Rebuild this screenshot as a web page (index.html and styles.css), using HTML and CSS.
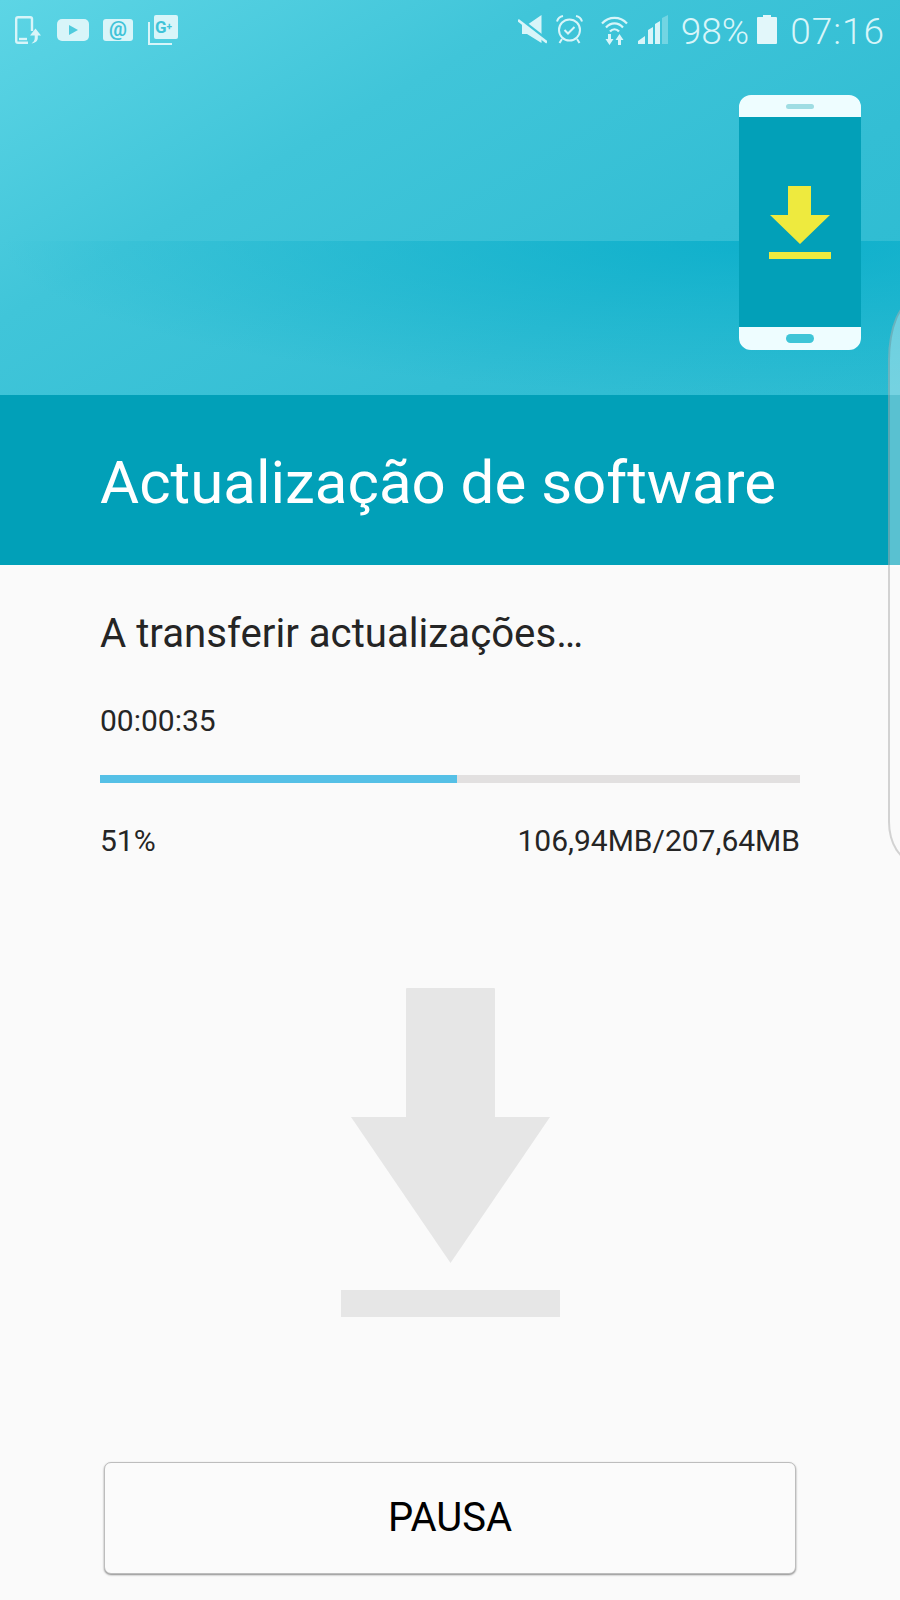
FILE: index.html
```html
<!DOCTYPE html>
<html lang="pt">
<head>
    <meta charset="UTF-8">
    <meta name="viewport" content="width=device-width, initial-scale=1.0">
    <title>Actualização de software</title>
    <link rel="stylesheet" href="styles.css">
</head>
<body>
    <div class="screen">
        <header class="hero">
            <div class="status-bar">
                <div class="status-left">
                    <svg class="ic" width="26" height="28" viewBox="0 0 26 28">
                        <path d="M17 15V3a1.800 1.800 0 0 0-1.800-1.800H3A1.800 1.800 0 0 0 1.200 3v22A1.800 1.800 0 0 0 3 26.800h10" fill="none" stroke="#d8f5f9" stroke-width="2.400"/>
                        <path d="M4 23h8" stroke="#d8f5f9" stroke-width="2.400"/>
                        <path d="M20.500 12.500l5.500 7h-3.200V22c0 3-2.500 5-6.300 5.500 2-1.500 3.200-3 3.200-5.500v-2.500H15z" fill="#d8f5f9"/>
                    </svg>
                    <svg class="ic ic-yt" width="32" height="22" viewBox="0 0 32 22">
                        <rect width="32" height="22" rx="5" fill="#d8f5f9"/>
                        <path d="M12 6l9 5-9 5z" fill="#4fcbdd"/>
                    </svg>
                    <div class="mail-badge">@</div>
                    <div class="gplus">
                        <div class="gplus-back"></div>
                        <div class="gplus-front">G<span class="gplus-plus">+</span></div>
                    </div>
                </div>
                <div class="status-right">
                    <svg class="ic" width="29" height="29" viewBox="0 0 29 29">
                        <path d="M4 10h5L23.500 0v28L9 19H4z" fill="#d8f5f9"/>
                        <path d="M0 2.500l29 22.500" stroke="#3fc5d9" stroke-width="3"/>
                        <path d="M0 5l29 22.500" stroke="#d8f5f9" stroke-width="2.600"/>
                    </svg>
                    <svg class="ic ic-alarm" width="27" height="29" viewBox="0 0 27 29">
                        <circle cx="13.500" cy="15" r="10.500" fill="none" stroke="#d8f5f9" stroke-width="2"/>
                        <path d="M8.500 15l3.500 3.500 6.500-6.500" fill="none" stroke="#d8f5f9" stroke-width="2"/>
                        <path d="M1 6.500C2 3 4 1.500 7 1M26 6.500C25 3 23 1.500 20 1M6 24l-2.500 4M21 24l2.500 4" fill="none" stroke="#d8f5f9" stroke-width="2"/>
                    </svg>
                    <svg class="ic ic-wifi" width="27" height="31" viewBox="0 0 27 31">
                        <path d="M1 9.500C8 2 19 2 26 9.500M5 13.500C10 8 17 8 22 13.500M9 17.500C11.500 14.500 15.500 14.500 18 17.500" fill="none" stroke="#d8f5f9" stroke-width="2.200"/>
                        <path d="M7 20h3v5h2.500l-4 6-4-6H7zM17 31h3v-5h2.500l-4-6-4 6H17z" fill="#d8f5f9"/>
                    </svg>
                    <svg class="ic ic-signal" width="30" height="29" viewBox="0 0 30 29">
                        <path d="M24 3l6-3v29h-6z" fill="#d8f5f9" opacity=".35"/>
                        <path d="M17 9l5-3v23h-5zM10 15l5-3v17h-5zM0 26l7-5v8H0z" fill="#d8f5f9"/>
                    </svg>
                    <span class="batt-pct">98%</span>
                    <svg class="ic ic-batt" width="20" height="29" viewBox="0 0 20 29">
                        <path d="M6 0h8v2h5a1 1 0 0 1 1 1v25a1 1 0 0 1-1 1H1a1 1 0 0 1-1-1V3a1 1 0 0 1 1-1h5z" fill="#e2f7fa"/>
                    </svg>
                    <span class="clock">07:16</span>
                </div>
            </div>
            <div class="phone-row">
                <svg width="122" height="255" viewBox="0 0 122 255">
                    <path d="M12 0h98a12 12 0 0 1 12 12v10H0V12A12 12 0 0 1 12 0zM0 232h122v11a12 12 0 0 1-12 12H12a12 12 0 0 1-12-12z" fill="#eefdff"/>
                    <rect y="22" width="122" height="210" fill="#02a0b8"/>
                    <rect x="47" y="9" width="28" height="5" rx="2.500" fill="#9fdde3"/>
                    <rect x="47" y="239" width="28" height="9" rx="4.500" fill="#3fc5d7"/>
                    <path d="M49 91h23v29h19l-30 29-30-29h18zM30 157h62v7H30z" fill="#eeea3e"/>
                </svg>
            </div>
        </header>

        <div class="title-band">
            <h1>Actualização de software</h1>
        </div>

        <main class="content">
            <h2>A transferir actualizações…</h2>
            <div class="timer">00:00:35</div>
            <div class="progress"><div class="progress-fill" style="width: 51%"></div></div>
            <div class="progress-info">
                <span>51%</span>
                <span>106,94MB/207,64MB</span>
            </div>
            <div class="big-icon">
                <svg width="219" height="329" viewBox="0 0 219 329">
                    <path d="M65 1a1 1 0 0 1 1-1h87a1 1 0 0 1 1 1v128h55L109.500 275 10 129h55zM0 302h219v27H0z" fill="#e6e6e6"/>
                </svg>
            </div>
            <button class="pause-btn">PAUSA</button>
        </main>

        <div class="edge-panel"></div>
    </div>
</body>
</html>
```

FILE: styles.css
```css
body {
    margin: 0;
    font-family: Roboto, "Liberation Sans", sans-serif;
    background-color: #fafafa;
}

.screen {
    position: relative;
    width: 900px;
    height: 1600px;
    overflow: hidden;
}

/* top area */
.hero {
    height: 395px;
    background:
        radial-gradient(ellipse 85% 100% at 85% 0, rgba(0,170,200,.7), rgba(0,170,200,0)) 0 241px / 100% 154px no-repeat,
        linear-gradient(150deg, #5dd5e5 0%, #40c5d9 35%, #33bed4 70%, #2bbbd1 100%);
}

.status-bar {
    height: 60px;
    padding: 14px 15px 0 15px;
    box-sizing: border-box;
    display: flex;
    justify-content: space-between;
    align-items: flex-start;
}

.ic {
    display: block;
    flex: none;
}

.status-left {
    display: flex;
    align-items: flex-start;
    padding-top: 2px;
}

.ic-yt {
    margin: 3px 14px 0 16px;
}

.mail-badge {
    width: 30px;
    height: 22px;
    margin-top: 3px;
    border-radius: 3px;
    background-color: #d8f5f9;
    color: #3fc3d8;
    font-size: 20px;
    font-weight: 700;
    line-height: 21px;
    text-align: center;
}

.gplus {
    position: relative;
    width: 30px;
    height: 29px;
    margin-left: 15px;
}

.gplus-back {
    position: absolute;
    left: 0;
    top: 6px;
    width: 22px;
    height: 21px;
    border-left: 2px solid #d8f5f9;
    border-bottom: 2px solid #d8f5f9;
}

.gplus-front {
    position: absolute;
    left: 6px;
    top: -1px;
    width: 24px;
    height: 24px;
    border-radius: 2px;
    background-color: #d8f5f9;
    color: #3fc3d8;
    font-size: 17px;
    font-weight: 700;
    line-height: 23px;
    padding-left: 1px;
    box-sizing: border-box;
}

.gplus-plus {
    font-size: 10px;
    vertical-align: 3px;
}

.status-right {
    display: flex;
    align-items: flex-start;
    padding-top: 1px;
    color: #d8f5f9;
}

.ic-alarm {
    margin-left: 9px;
}

.ic-wifi {
    margin: -1px 0 0 18px;
}

.ic-signal {
    margin-left: 10px;
}

.batt-pct {
    margin: -2px 0 0 13px;
    font-size: 37px;
    font-weight: 300;
    line-height: 37px;
}

.ic-batt {
    margin-left: 8px;
}

.clock {
    margin: -2px 0 0 13px;
    font-size: 37px;
    font-weight: 300;
    line-height: 37px;
    letter-spacing: 1px;
}

.phone-row {
    display: flex;
    justify-content: flex-end;
    padding: 35px 39px 0 0;
}

.phone-row svg {
    display: block;
}

/* title */
.title-band {
    height: 170px;
    background-color: #01a0b8;
    display: flex;
    align-items: center;
    padding-left: 100px;
}

h1 {
    margin: 0;
    color: #fff;
    font-size: 60px;
    font-weight: 400;
    line-height: 1;
    padding-top: 6px;
}

/* main part */
.content {
    padding: 0 100px;
}

h2 {
    margin: 0;
    padding-top: 46px;
    color: #252525;
    font-size: 40.2px;
    font-weight: 400;
    line-height: 46px;
}

.timer {
    margin-top: 46px;
    color: #252525;
    font-size: 30px;
    line-height: 36px;
}

.progress {
    height: 8px;
    margin-top: 36px;
    background-color: #e2e0e0;
}

.progress-fill {
    height: 100%;
    background-color: #55c0e6;
}

.progress-info {
    display: flex;
    justify-content: space-between;
    margin-top: 40px;
    color: #252525;
    font-size: 30px;
    line-height: 36px;
}

.big-icon {
    display: flex;
    justify-content: center;
    margin-top: 129px;
}

.big-icon svg {
    display: block;
}

.pause-btn {
    display: block;
    width: 692px;
    height: 112px;
    margin: 145px 0 0 4px;
    padding: 0 0 2px;
    border: 1px solid #bdbdbd;
    border-radius: 7px;
    background-color: #fbfbfb;
    box-shadow: 0 1px 2px rgba(0,0,0,.45);
    color: #000;
    font-family: Roboto, sans-serif;
    font-size: 40px;
}

/* side handle, sits over everything */
.edge-panel {
    position: absolute;
    left: 888px;
    top: 300px;
    width: 30px;
    height: 562px;
    box-sizing: border-box;
    border: 2px solid rgba(90,90,90,.25);
    border-radius: 26px 0 0 26px / 60px 0 0 40px;
    background: linear-gradient(to bottom, rgba(255,255,255,.35) 0, rgba(255,255,255,.35) 265px, rgba(255,255,255,0) 265px);
}
```
